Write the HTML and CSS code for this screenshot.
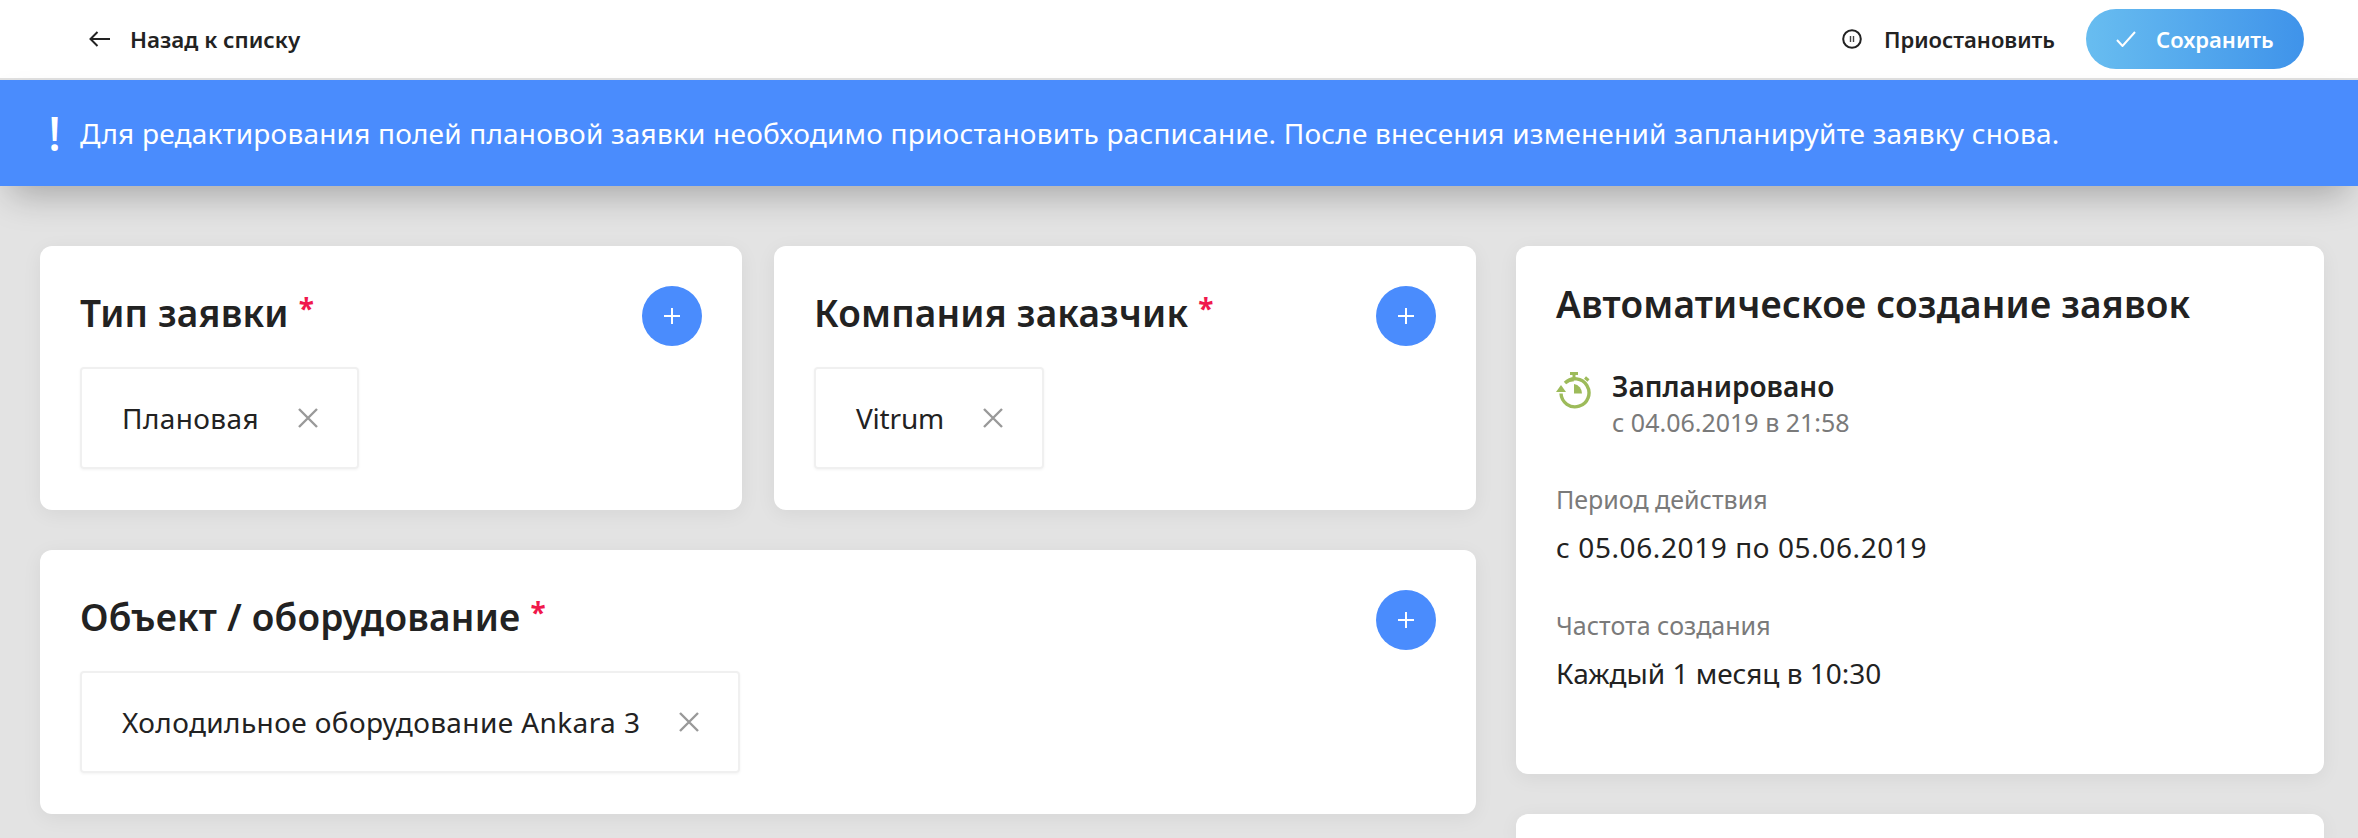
FILE: index.html
```html
<!DOCTYPE html>
<html lang="ru">
<head>
<meta charset="utf-8">
<title>Плановая заявка</title>
<link rel="stylesheet" href="styles.css">
</head>
<body>
<header class="topbar">
  <a class="back">
    <svg class="back-icon" width="21" height="16" viewBox="0 0 21 16"><path d="M21 8H1.5M8.5 1L1.5 8l7 7" fill="none" stroke="#222" stroke-width="2"/></svg>
    <span>Назад к списку</span>
  </a>
  <div class="actions">
    <a class="pause">
      <svg width="20" height="20" viewBox="0 0 20 20"><circle cx="10" cy="10" r="8.8" fill="none" stroke="#222" stroke-width="2"/><path d="M8.5 7v6M11.5 7v6" stroke="#444" stroke-width="1.4"/></svg>
      <span>Приостановить</span>
    </a>
    <button class="save">
      <svg width="20" height="16" viewBox="0 0 20 16"><path d="M1 9l5.5 6L19 1" fill="none" stroke="#fff" stroke-width="2"/></svg>
      <span>Сохранить</span>
    </button>
  </div>
</header>
<div class="banner">
  <span class="bang">!</span>
  <span class="banner-text">Для редактирования полей плановой заявки необходимо приостановить расписание. После внесения изменений запланируйте заявку снова.</span>
</div>
<main class="layout">
  <div class="left">
    <section class="card field">
      <div class="field-head">
        <h2 class="title">Тип заявки<span class="req">*</span></h2>
        <button class="add"><svg width="16" height="16" viewBox="0 0 16 16"><path d="M8 0v16M0 8h16" stroke="#fff" stroke-width="2"/></svg></button>
      </div>
      <div class="chip"><span>Плановая</span><svg width="20" height="20" viewBox="0 0 20 20"><path d="M1 1l18 18M19 1L1 19" stroke="#999" stroke-width="2.4"/></svg></div>
    </section>
    <section class="card field">
      <div class="field-head">
        <h2 class="title">Компания заказчик<span class="req">*</span></h2>
        <button class="add"><svg width="16" height="16" viewBox="0 0 16 16"><path d="M8 0v16M0 8h16" stroke="#fff" stroke-width="2"/></svg></button>
      </div>
      <div class="chip chip-latin"><span>Vitrum</span><svg width="20" height="20" viewBox="0 0 20 20"><path d="M1 1l18 18M19 1L1 19" stroke="#999" stroke-width="2.4"/></svg></div>
    </section>
    <section class="card field wide">
      <div class="field-head">
        <h2 class="title">Объект / оборудование<span class="req">*</span></h2>
        <button class="add"><svg width="16" height="16" viewBox="0 0 16 16"><path d="M8 0v16M0 8h16" stroke="#fff" stroke-width="2"/></svg></button>
      </div>
      <div class="chip"><span>Холодильное оборудование Ankara 3</span><svg width="20" height="20" viewBox="0 0 20 20"><path d="M1 1l18 18M19 1L1 19" stroke="#999" stroke-width="2.4"/></svg></div>
    </section>
  </div>
  <div class="right">
    <section class="card auto">
      <h2 class="title">Автоматическое создание заявок</h2>
      <div class="status">
        <svg class="status-icon" width="36" height="37" viewBox="0 0 36 37">
          <path d="M14 1.5h8M18 2v5" fill="none" stroke="#9dbb5a" stroke-width="3"/>
          <path d="M29 5.5l3.500 3" fill="none" stroke="#9dbb5a" stroke-width="3"/>
          <path d="M5 21.500A14 14 0 1 0 9 11A14 14 0 0 1 18 7.500" fill="none" stroke="#9dbb5a" stroke-width="3.400"/>
          <path d="M0 20h10l-5 -7z" fill="#9dbb5a"/>
          <path d="M18 12a9.500 9.500 0 0 1 8 9.500h-8z" fill="#9dbb5a"/>
        </svg>
        <div>
          <div class="status-name">Запланировано</div>
          <div class="status-date">с 04.06.2019 в 21:58</div>
        </div>
      </div>
      <div class="label period">Период действия</div>
      <div class="value value-dates">с 05.06.2019 по 05.06.2019</div>
      <div class="label freq">Частота создания</div>
      <div class="value">Каждый 1 месяц в 10:30</div>
    </section>
    <section class="card next"></section>
  </div>
</main>
</body>
</html>
```
FILE: styles.css
```css
* { box-sizing: border-box; }
html, body { margin: 0; height: 838px; overflow: hidden; }
body {
  background: #e3e3e3;
  color: #222;
  font-family: "Noto Sans", "Open Sans", sans-serif;
}
.topbar {
  height: 80px;
  background: #fff;
  border-bottom: 2px solid #e0e0e0;
  display: flex;
  align-items: center;
  justify-content: space-between;
  padding: 0 54px 0 89px;
}
.back, .pause, .actions { display: flex; align-items: center; }
.back { gap: 20px; font-size: 22.4px; font-weight: 600; }
.actions { gap: 31px; }
.pause { gap: 22px; font-size: 22px; font-weight: 600; }
.save {
  width: 218px;
  height: 60px;
  border: 0;
  border-radius: 30px;
  background: linear-gradient(90deg, #68bdf0, #3f93ea);
  color: #fff;
  font: 600 22px "Noto Sans", sans-serif;
  display: flex;
  align-items: center;
  gap: 20px;
  padding: 0 0 0 30px;
}
.banner {
  height: 106px;
  background: #4a8cfd;
  color: #fff;
  display: flex;
  align-items: center;
  padding-left: 48px;
  box-shadow: 0 18px 36px -10px rgba(0, 0, 0, .28);
  position: relative;
}
.bang { width: 32px; font-size: 48px; font-weight: 500; line-height: 1; }
.banner-text { font-size: 28px; letter-spacing: .2px; }
.layout {
  display: grid;
  grid-template-columns: 1437px 808px;
  gap: 39px;
  padding: 60px 34px 0 40px;
}
.left {
  display: grid;
  grid-template-columns: 702px 702px;
  grid-template-rows: 264px 264px;
  gap: 40px 32px;
}
.right { display: flex; flex-direction: column; gap: 40px; }
.card {
  background: #fff;
  border-radius: 12px;
  box-shadow: 0 4px 20px rgba(0, 0, 0, .06);
}
.field { padding: 40px 40px 0; }
.wide { grid-column: 1 / 3; }
.field-head {
  display: flex;
  justify-content: space-between;
  align-items: flex-start;
  height: 81px;
}
.title {
  margin: 0;
  font-size: 37px;
  font-weight: 600;
  line-height: 50px;
  letter-spacing: .2px;
  color: #222;
}
.field .title { line-height: 44px; }
.req { color: #f0184c; font-size: 28px; font-weight: 700; margin-left: 10px; vertical-align: 8px; }
.add {
  width: 60px;
  height: 60px;
  border: 0;
  border-radius: 50%;
  background: #4a8cfd;
  padding: 0;
  display: flex;
  align-items: center;
  justify-content: center;
}
.chip {
  display: inline-flex;
  align-items: center;
  gap: 39px;
  height: 102px;
  padding: 0 39px 0 40px;
  border: 2px solid #f0f0f0;
  border-radius: 4px;
  font-size: 28px;
  letter-spacing: .4px;
  box-shadow: 0 1px 3px rgba(0, 0, 0, .05);
}
.chip-latin { letter-spacing: -.2px; }
.auto { height: 528px; padding: 33px 40px 0 40px; }
.next { height: 24px; border-radius: 12px 12px 0 0; }
.status { display: flex; gap: 20px; margin-top: 39px; }
.status-icon { margin-top: 4px; }
.status-name { font-size: 28px; font-weight: 600; line-height: 36px; }
.status-date { font-size: 25px; color: #7a7a7a; line-height: 36px; }
.label { font-size: 25px; color: #7a7a7a; line-height: 36px; margin-top: 41px; }
.value { font-size: 28px; line-height: 36px; margin-top: 12px; }
.value-dates { letter-spacing: .6px; }
.freq { margin-top: 42px; }
```
